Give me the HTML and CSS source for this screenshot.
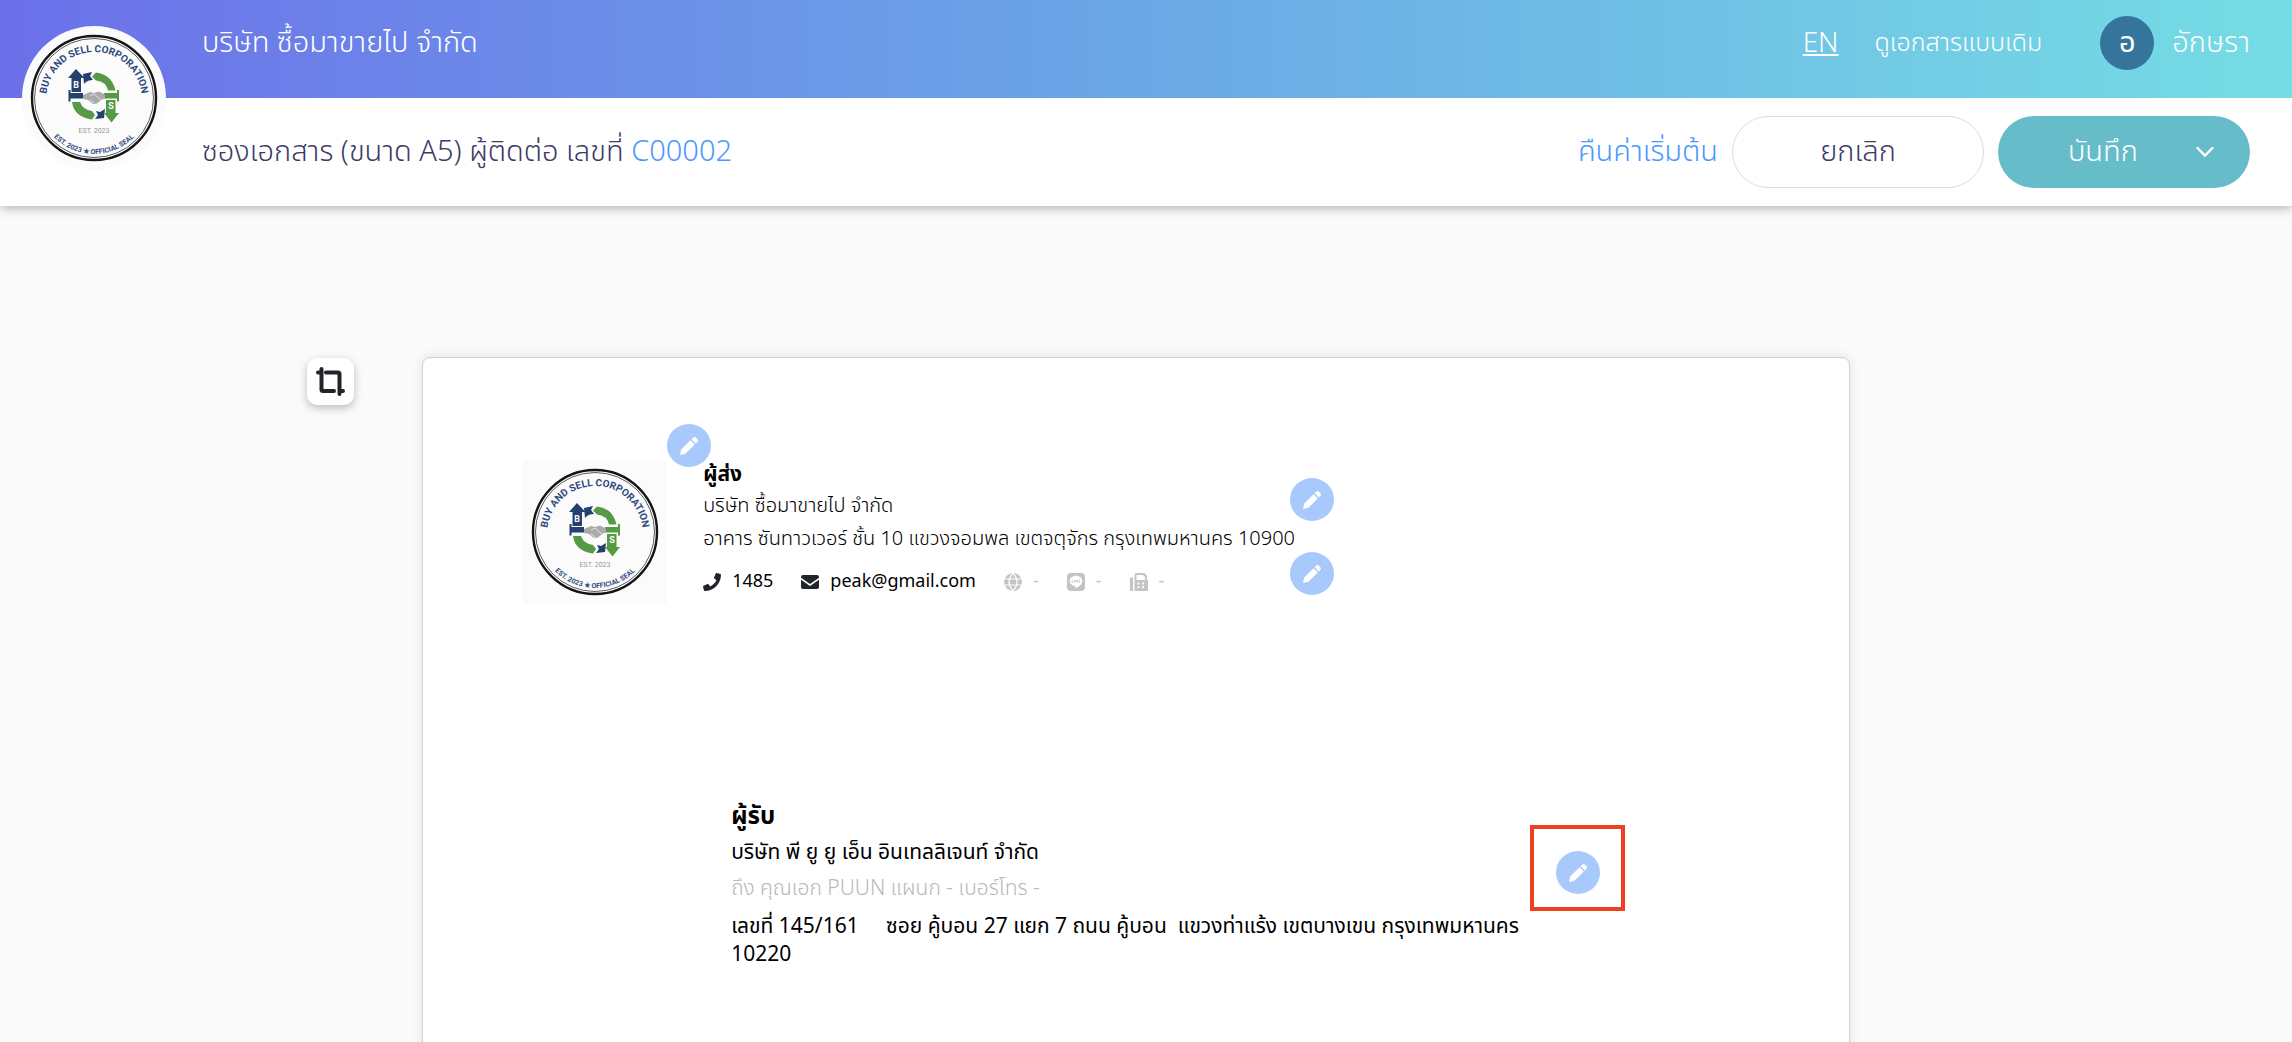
FILE: index.html
```html
<!DOCTYPE html>
<html lang="th">
<head>
<meta charset="UTF-8">
<meta name="viewport" content="width=device-width, initial-scale=1.0">
<title>ซองเอกสาร C00002</title>
<link rel="stylesheet" href="styles.css">
</head>
<body>
<!-- shared icon -->
<svg class="sprite" aria-hidden="true">
    <symbol id="pencil" viewBox="0 0 18 18">
        <path d="M0 18l1.200-5.400L10.600 3.200l4.200 4.200-9.400 9.400zM11.600 2.200l1.400-1.400q1.500-1.400 3 0l1.200 1.200q1.400 1.500 0 3l-1.400 1.400z" fill="#fff"/>
    </symbol>
</svg>

<header class="topbar">
    <svg class="company-logo" viewBox="0 0 144 144" role="img" aria-label="Buy and Sell Corporation">
        <g id="seal">
            <rect width="144" height="144" fill="#fbfbfb"/>
            <circle cx="72" cy="72" r="62" fill="none" stroke="#151515" stroke-width="2.400"/>
            <circle cx="72" cy="72" r="59.500" fill="none" stroke="#333" stroke-width="0.800"/>
            <path id="arcTop" d="M24 74a48 48 0 0 1 96 0" fill="none"/>
            <path id="arcBottom" d="M16 72a56 56 0 0 0 112 0" fill="none"/>
            <text class="seal-name"><textPath href="#arcTop" startOffset="50%">BUY AND SELL CORPORATION</textPath></text>
            <text class="seal-foot"><textPath href="#arcBottom" startOffset="50%">EST. 2023 ★ OFFICIAL SEAL</textPath></text>
            <g fill="#25406f">
                <path d="M54 43l-8 9h3.500v14h9.500V52h3.500z"/>
                <path d="M46.500 64h2v3H61v5.500H48.500v3h-2z"/>
                <path d="M61 48l9-2-2 4 3 4q-6 0-9 4z"/>
                <path d="M83 83l-5 3-4-1 2 4-3 4 9-1z"/>
            </g>
            <g fill="#569a45">
                <path d="M74 46.500q16 2 19.500 18H86q-2-9-12-10l-4-4z"/>
                <path d="M50 76h8q3 8 12 9l3 4-3 4.500Q52 91 50 76z"/>
                <path d="M97 64h-2v3H82v5.500h13v3h2z"/>
                <path d="M84 74h9.500v13H97l-7.500 9.500L82 87h2z"/>
            </g>
            <path d="M61 69l7-3 4 1 5-1.500 6 3v4l-3 1-5 4-4 .500-5-4-5-1z" fill="#aaa"/>
            <path d="M68 70l4-2 7 6M68 74l4 3" stroke="#eee" stroke-width="0.800" fill="none"/>
            <text class="seal-letter" x="54" y="62">B</text>
            <text class="seal-letter" x="89" y="83">S</text>
            <text class="seal-year" x="72" y="107">EST. 2023</text>
        </g>
    </svg>
    <span class="company-name">บริษัท ซื้อมาขายไป จำกัด</span>
    <nav class="topbar-nav">
        <a href="#" class="lang">EN</a>
        <a href="#" class="classic">ดูเอกสารแบบเดิม</a>
        <a href="#" class="user"><span class="avatar">อ</span>อักษรา</a>
    </nav>
</header>

<div class="toolbar">
    <h1>ซองเอกสาร (ขนาด A5) ผู้ติดต่อ เลขที่ <a href="#">C00002</a></h1>
    <div class="actions">
        <a href="#" class="reset">คืนค่าเริ่มต้น</a>
        <button type="button" class="btn btn-cancel">ยกเลิก</button>
        <button type="button" class="btn btn-save">
            <span>บันทึก</span>
            <svg width="18" height="12" viewBox="0 0 18 12"><path d="M1.500 2l7.500 7.500L16.500 2" fill="none" stroke="#fff" stroke-width="2.400" stroke-linecap="round"/></svg>
        </button>
    </div>
</div>

<main class="workspace">
    <button type="button" class="crop" aria-label="ขนาดกระดาษ">
        <svg width="29" height="29" viewBox="0 0 29 29" fill="none" stroke="#212529" stroke-width="4" stroke-linecap="round" stroke-linejoin="round">
            <path d="M2 5.500h3.500M5.500 2v20.500q0 1.500 1.500 1.500h11M10 5.500h12q1.500 0 1.500 1.500v20M23.500 24H27"/>
        </svg>
    </button>

    <article class="paper">
        <section class="sender">
            <div class="sender-logo">
                <svg class="logo-image" viewBox="0 0 144 144" role="img" aria-label="Buy and Sell Corporation"><use href="#seal"/></svg>
                <button type="button" class="edit edit-logo" aria-label="แก้ไขโลโก้"><svg><use href="#pencil"/></svg></button>
            </div>
            <div class="sender-info">
                <h2>ผู้ส่ง</h2>
                <p>บริษัท ซื้อมาขายไป จำกัด</p>
                <p>อาคาร ซันทาวเวอร์ ชั้น 10 แขวงจอมพล เขตจตุจักร กรุงเทพมหานคร 10900</p>
                <ul class="contacts">
                    <li>
                        <svg width="18" height="18" viewBox="0 0 512 512"><path fill="#212529" d="M493 25L389 1c-11-3-23 3-27 14l-48 112c-4 10-1 21 7 28l61 50c-36 77-98 139-176 176l-50-61c-7-8-18-11-28-7L16 361c-11 5-17 17-14 28l24 104c3 11 12 19 24 19 256 0 462-207 462-462 0-12-8-22-19-25z"/></svg>
                        <span>1485</span>
                    </li>
                    <li>
                        <svg width="18" height="18" viewBox="0 0 18 18"><path fill="#212529" d="M2 2h14q2 0 2 2v.800L9 11 0 4.800V4q0-2 2-2zM0 6.800L9 13l9-6.200V14q0 2-2 2H2q-2 0-2-2z"/></svg>
                        <span>peak@gmail.com</span>
                    </li>
                    <li class="empty">
                        <svg width="18" height="18" viewBox="0 0 18 18"><circle cx="9" cy="9" r="9" fill="#c4c4c4"/><path d="M0 6h18M0 12h18M9 0q-8 9 0 18M9 0q8 9 0 18" fill="none" stroke="#fff" stroke-width="1.200"/></svg>
                        <span>-</span>
                    </li>
                    <li class="empty">
                        <svg width="18" height="18" viewBox="0 0 18 18"><rect width="18" height="18" rx="4" fill="#c4c4c4"/><path d="M9 2.800c-3.600 0-6.300 2.300-6.300 5.200 0 3.200 3.600 4.900 5.600 5.100v2.200c3-1.300 7-4 7-7.300 0-2.900-2.700-5.200-6.300-5.200z" fill="#fff"/><path d="M5 7v2.300h1.300M7.500 7v2.300M8.800 9.300V7l1.600 2.300V7M13.200 7h-1.300v2.300h1.300" fill="none" stroke="#c4c4c4" stroke-width="0.800"/></svg>
                        <span>-</span>
                    </li>
                    <li class="empty">
                        <svg width="18" height="18" viewBox="0 0 18 18"><path fill="#c4c4c4" fill-rule="evenodd" d="M0 5.500q0-1 1-1h2V18H1q-1 0-1-1zM4.500 2q0-2 2-2h8l2.500 2.500V7h1v9.500q0 1.500-1.500 1.500h-12zM6.500 2v5H15V3.500h-1.500V2zM7.500 9.500v2h2v-2zM12 9.500v2h2v-2zM7.500 13.200v2h2v-2zM12 13.200v2h2v-2z"/></svg>
                        <span>-</span>
                    </li>
                </ul>
            </div>
            <div class="sender-edits">
                <button type="button" class="edit" aria-label="แก้ไขที่อยู่"><svg><use href="#pencil"/></svg></button>
                <button type="button" class="edit" aria-label="แก้ไขช่องทางติดต่อ"><svg><use href="#pencil"/></svg></button>
            </div>
        </section>

        <section class="recipient">
            <div class="recipient-info">
                <h2>ผู้รับ</h2>
                <p>บริษัท พี ยู ยู เอ็น อินเทลลิเจนท์ จำกัด</p>
                <p class="attention">ถึง คุณเอก PUUN แผนก - เบอร์โทร -</p>
                <p class="address">เลขที่ 145/161 &nbsp; &nbsp; ซอย คู้บอน 27 แยก 7 ถนน คู้บอน &nbsp;แขวงท่าแร้ง เขตบางเขน กรุงเทพมหานคร<br>10220</p>
            </div>
            <div class="highlight">
                <button type="button" class="edit" aria-label="แก้ไขผู้รับ"><svg><use href="#pencil"/></svg></button>
            </div>
        </section>
    </article>
</main>
</body>
</html>
```

FILE: styles.css
```css
* {
    box-sizing: border-box;
}
body {
    display: flex;
    flex-direction: column;
    height: 100vh;
    margin: 0;
    overflow: hidden;
    background-color: #fafafa;
    color: #000;
    font-family: "Noto Sans Thai", "Noto Sans", sans-serif;
    font-weight: 300;
}
h1, h2, p, ul {
    margin: 0;
    padding: 0;
}
a {
    color: #4c97ff;
    text-decoration: none;
}
button {
    padding: 0;
    border: none;
    font: inherit;
    cursor: pointer;
}
.sprite {
    position: absolute;
    width: 0;
    height: 0;
}

/* top bar */
.topbar {
    position: relative;
    z-index: 2;
    flex: none;
    display: flex;
    align-items: center;
    justify-content: space-between;
    height: 98px;
    padding: 0 42px 12px 202px;
    background: linear-gradient(90deg, #6c70ea, #6ba8e6 50%, #75dde4);
    color: #fff;
    font-size: 29px;
}
.company-logo {
    position: absolute;
    top: 26px;
    left: 22px;
    width: 144px;
    height: 144px;
    border-radius: 50%;
}
.topbar-nav {
    display: flex;
    align-items: center;
}
.topbar-nav a {
    color: #fff;
}
.topbar-nav .lang {
    margin-right: 36px;
    font-size: 28px;
    text-decoration: underline;
}
.classic {
    margin-right: 58px;
    font-size: 25px;
}
.user {
    display: flex;
    align-items: center;
    gap: 18px;
}
.avatar {
    width: 54px;
    height: 54px;
    border-radius: 50%;
    background-color: #35749b;
    font-weight: 400;
    line-height: 54px;
    text-align: center;
}

/* document toolbar */
.toolbar {
    position: relative;
    z-index: 1;
    flex: none;
    display: flex;
    align-items: center;
    justify-content: space-between;
    height: 108px;
    padding: 0 42px 0 202px;
    background-color: #fff;
    box-shadow: 0 2px 10px rgba(0, 0, 0, 0.3);
    color: #3d3b66;
    font-size: 29px;
}
.toolbar h1 {
    font-size: inherit;
    font-weight: inherit;
}
.actions {
    display: flex;
    align-items: center;
}
.reset {
    margin-right: 14px;
}
.btn {
    width: 252px;
    height: 72px;
    border-radius: 36px;
}
.btn-cancel {
    margin-right: 14px;
    border: 1px solid #dcdbe6;
    background-color: #fff;
    color: #3d3b66;
}
.btn-save {
    display: flex;
    align-items: center;
    justify-content: space-between;
    padding: 0 36px 0 70px;
    background-color: #66bdc9;
    color: #fff;
}

/* workspace */
.workspace {
    flex: 1;
    display: flex;
    align-items: flex-start;
    gap: 68px;
    min-height: 0;
    padding: 151px 19.3% 0 13.4%;
    overflow: hidden;
}
.crop {
    flex: none;
    display: flex;
    align-items: center;
    justify-content: center;
    width: 47px;
    height: 47px;
    margin-top: 1px;
    border-radius: 10px;
    background-color: #fff;
    box-shadow: 0 3px 8px rgba(0, 0, 0, 0.25);
}
.paper {
    flex: 1;
    min-height: 1000px;
    padding: 102px 100px;
    border: 1px solid #d0d0d0;
    border-radius: 8px;
    background-color: #fff;
    box-shadow: 0 0 12px rgba(0, 0, 0, 0.1);
}
.edit {
    display: flex;
    align-items: center;
    justify-content: center;
    width: 44px;
    height: 43px;
    border-radius: 50%;
    background-color: #a8c9fb;
}
.edit svg {
    width: 18px;
    height: 18px;
}

/* sender */
.sender {
    display: flex;
    font-size: 20px;
}
.sender-logo {
    position: relative;
    height: 144px;
    margin-right: 36px;
}
.logo-image {
    display: block;
    width: 144px;
    height: 144px;
}
.edit-logo {
    position: absolute;
    top: -36px;
    left: 144px;
}
.sender-info {
    width: 587px;
    white-space: nowrap;
}
.sender h2 {
    font-size: 21px;
    line-height: 30px;
}
.sender p {
    line-height: 33px;
}
.contacts {
    display: flex;
    gap: 28px;
    margin-top: 9px;
    font-size: 18px;
    font-weight: 400;
    line-height: 33px;
    list-style: none;
}
.contacts li {
    display: flex;
    align-items: center;
    gap: 11px;
}
.empty {
    color: #c4c4c4;
}
.sender-edits {
    display: flex;
    flex-direction: column;
    gap: 31px;
    padding-top: 18px;
}

/* recipient */
.recipient {
    display: flex;
    margin-top: 195px;
    padding-left: 208px;
    font-size: 21px;
    font-weight: 400;
}
.recipient-info {
    width: 799px;
}
.recipient h2 {
    font-size: 24px;
    line-height: 36px;
}
.recipient p {
    line-height: 36px;
}
.recipient .attention {
    color: #b8b8b8;
    font-weight: 300;
}
.recipient .address {
    margin-top: 6px;
    line-height: 28px;
}
.highlight {
    display: flex;
    align-items: flex-end;
    justify-content: center;
    width: 95px;
    height: 86px;
    margin-top: 26px;
    padding-bottom: 13px;
    border: 4px solid #ee4023;
}

/* seal lettering */
.seal-name, .seal-foot, .seal-letter, .seal-year {
    font-family: Roboto, "Liberation Sans", sans-serif;
    font-weight: 700;
    text-anchor: middle;
    fill: #2f4a80;
}
.seal-name {
    font-size: 10px;
}
.seal-foot {
    font-size: 7px;
}
.seal-letter {
    font-size: 9px;
    fill: #fff;
}
.seal-year {
    font-size: 7px;
    font-weight: 400;
    fill: #999;
}
```
